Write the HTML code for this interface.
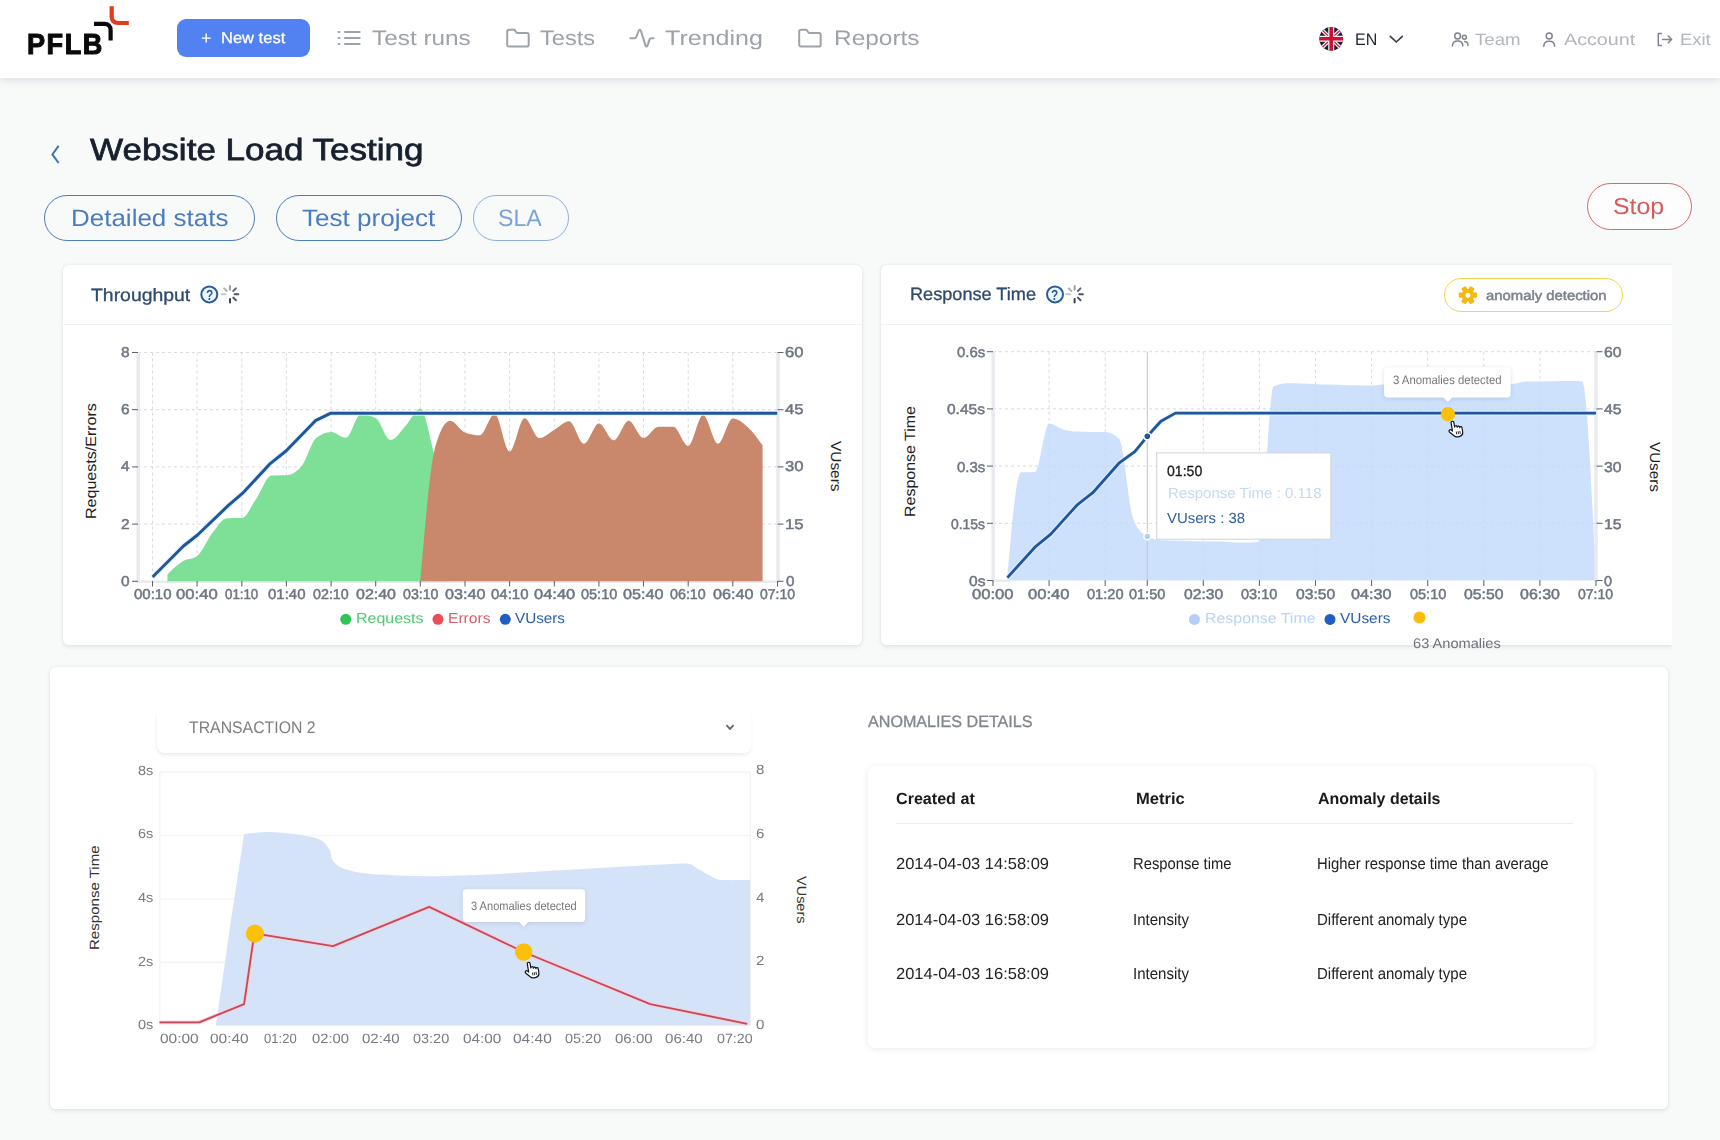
<!DOCTYPE html>
<html lang="en">
<head>
<meta charset="utf-8">
<title>Website Load Testing</title>
<style>
html,body{margin:0;padding:0}
body{width:1720px;height:1140px;position:relative;overflow:hidden;background:#f8f9f9;font-family:"Liberation Sans",sans-serif}
.abs{position:absolute}
.t{text-rendering:geometricPrecision;position:absolute;white-space:nowrap;line-height:1;transform-origin:0 0;display:block}
svg{position:absolute;left:0;top:0;overflow:visible}
#header{left:0;top:0;width:1720px;height:77.6px;background:#fff;box-shadow:0 2px 8px rgba(60,60,100,.14)}
.card{background:#fff;border-radius:6px;box-shadow:0 1.5px 4px rgba(40,50,80,.10),0 0 3px rgba(40,50,80,.05)}
.pill{border:1.5px solid #4a7cc0;border-radius:24px;box-sizing:border-box}
.hsep{height:1px;background:#eff1f3}

</style>
</head>
<body>
<div id="header" class="abs"></div>
<div class="abs" id="newtest" style="left:176.75px;top:18.75px;width:133.25px;height:38.25px;border-radius:9px;background:#5282f2"></div>
<div class="abs pill" style="left:44.3px;top:194.6px;width:210.4px;height:46.4px"></div>
<div class="abs pill" style="left:275.9px;top:194.6px;width:185.9px;height:46.4px"></div>
<div class="abs pill" style="left:473.1px;top:194.6px;width:96.1px;height:46.4px;border-color:#8db0de"></div>
<div class="abs pill" style="left:1587px;top:182.7px;width:104.5px;height:47.1px;border-color:#d4686a;background:#fdfdfd"></div>

<div class="abs card" id="card1" style="left:62.5px;top:265px;width:799px;height:380px"></div>
<div class="abs hsep" style="left:62.5px;top:323.5px;width:799px"></div>
<div class="abs card" id="card2" style="left:881px;top:265.1px;width:791px;height:380.2px;border-radius:6px 0 0 6px;clip-path:inset(-10px 0 -10px -10px)"></div>
<div class="abs hsep" style="left:881px;top:323.5px;width:791px"></div>
<div class="abs pill" style="left:1444.1px;top:278.1px;width:179.2px;height:33.5px;border-color:#f3d450;border-width:1.9px"></div>

<div class="abs card" id="card3" style="left:49.5px;top:667.4px;width:1618px;height:441.6px"></div>
<div class="abs" id="dropdown" style="left:157.3px;top:707.9px;width:593.3px;height:45px;border-radius:7px;background:#fff;box-shadow:0 3px 4px -1px rgba(40,50,70,.08),-1px 1px 2px rgba(40,50,70,.03)"></div>
<div class="abs card" id="tablecard" style="left:867.6px;top:765.9px;width:726px;height:282.2px;border-radius:7px;box-shadow:0 1px 6px rgba(40,50,70,.10)"></div>
<div class="abs hsep" style="left:895.5px;top:823px;width:677.5px;background:#ededed"></div>

<svg id="gfx" width="1720" height="1140" viewBox="0 0 1720 1140">
<defs><filter id="sh" x="-20%" y="-40%" width="140%" height="190%"><feDropShadow dx="0" dy="1" stdDeviation="2.2" flood-color="#3c4a64" flood-opacity=".18"/></filter></defs>
<g id="icons">
<path d="M94,23.8H104.5C108.2,23.8 110.6,26.2 110.6,30V40.6" fill="none" stroke="#0a0a0a" stroke-width="4.2"/>
<path d="M111.7,6.2V16.5C111.7,20.5 114,23 118,23H128.8" fill="none" stroke="#e03c1f" stroke-width="4.2"/>
<g stroke="#9ea3a9" stroke-width="2.1" fill="none" stroke-linecap="round">
<path d="M338.6,32H339.4M345,32H359.6"/>
<path d="M338.6,38H339.4M345,38H359.6"/>
<path d="M338.6,44H339.4M345,44H359.6"/>
</g>
<path transform="translate(506.3,28.8)" d="M0.9,2.7C0.9,1.7 1.7,0.9 2.7,0.9H8L10.6,4.2H20.6C21.6,4.2 22.4,5 22.4,6V16C22.4,17 21.6,17.8 20.6,17.8H2.7C1.7,17.8 0.9,17 0.9,16Z" fill="none" stroke="#9ea3a9" stroke-width="2" stroke-linejoin="round"/>
<path transform="translate(798.3,28.8)" d="M0.9,2.7C0.9,1.7 1.7,0.9 2.7,0.9H8L10.6,4.2H20.6C21.6,4.2 22.4,5 22.4,6V16C22.4,17 21.6,17.8 20.6,17.8H2.7C1.7,17.8 0.9,17 0.9,16Z" fill="none" stroke="#9ea3a9" stroke-width="2" stroke-linejoin="round"/>
<path d="M630.3,38.3H634.6C635.6,38.3 636,37.8 636.4,36.8L638.6,31C639.2,29.4 640.4,29.4 641,31L645.4,45.4C645.9,47 647,47 647.6,45.4L649.4,39.9C649.8,38.8 650.3,38.3 651.3,38.3H653.6" fill="none" stroke="#9ea3a9" stroke-width="2" stroke-linejoin="round" stroke-linecap="round"/>
<g><clipPath id="fc"><circle cx="1331.2" cy="38.8" r="11.9"/></clipPath><g clip-path="url(#fc)"><rect x="1319" y="26" width="25" height="26" fill="#1d1f38"/><path d="M1319,27L1343.4,50.6M1343.4,27L1319,50.6" stroke="#f3f3f6" stroke-width="3.6"/><path d="M1319,27L1343.4,50.6M1343.4,27L1319,50.6" stroke="#c8102e" stroke-width="1.2"/><path d="M1331.2,26V52M1318,38.8H1345" stroke="#f3f3f6" stroke-width="6"/><path d="M1331.2,26V52M1318,38.8H1345" stroke="#cc1230" stroke-width="3.6"/></g></g>
<path d="M1390.3,36.4L1396.3,42L1402.3,36.4" fill="none" stroke="#3a3f4a" stroke-width="1.7" stroke-linecap="round" stroke-linejoin="round"/>
<g fill="none" stroke="#7f848e" stroke-width="1.5" stroke-linecap="round"><circle cx="1457.6" cy="36" r="2.9"/><path d="M1452.4,46C1452.4,42.6 1454.6,41 1457.6,41C1460.6,41 1462.8,42.6 1462.8,46"/><circle cx="1464.4" cy="37.2" r="2"/><path d="M1464.6,41.6C1466.6,41.6 1468,43 1468,45.6"/></g>
<g fill="none" stroke="#7f848e" stroke-width="1.5" stroke-linecap="round"><circle cx="1549.2" cy="36" r="3"/><path d="M1543.8,46.2C1543.8,42.4 1546,41.2 1549.2,41.2C1552.4,41.2 1554.6,42.4 1554.6,46.2"/></g>
<g fill="none" stroke="#7f848e" stroke-width="1.5" stroke-linecap="round" stroke-linejoin="round"><path d="M1661.4,33.4H1658.3V45.4H1661.4"/><path d="M1662.6,39.4H1671.4M1668.2,36L1671.6,39.4L1668.2,42.8"/></g>
<path d="M58.6,145.8L52.4,154.4L58.6,163" fill="none" stroke="#3f73b8" stroke-width="2"/>
<circle cx="209.3" cy="294.4" r="8" fill="#ebf6ff" stroke="#2c5c96" stroke-width="2"/>
<circle cx="1055" cy="294.4" r="8" fill="#ebf6ff" stroke="#2c5c96" stroke-width="2"/>
<g stroke-linecap="round" stroke-width="2" fill="none" stroke="#3b3f55"><path d="M230,289.7L230,286" stroke-opacity="0.5"/><path d="M233.3,291L235.9,288.4" stroke-opacity="0.8"/><path d="M234.6,294.3L238.3,294.3" stroke-opacity="0.9"/><path d="M233.3,297.6L235.9,300.2" stroke-opacity="0.9"/><path d="M230,298.9L230,302.6" stroke-opacity="1.0"/><path d="M226.7,297.6L224.1,300.2" stroke-opacity="0.04"/><path d="M225.4,294.3L221.7,294.3" stroke-opacity="0.3"/><path d="M226.7,291L224.1,288.4" stroke-opacity="0.42"/></g>
<g stroke-linecap="round" stroke-width="2" fill="none" stroke="#3b3f55"><path d="M1074.6,289.7L1074.6,286" stroke-opacity="0.5"/><path d="M1077.9,291L1080.5,288.4" stroke-opacity="0.8"/><path d="M1079.2,294.3L1082.9,294.3" stroke-opacity="0.9"/><path d="M1077.9,297.6L1080.5,300.2" stroke-opacity="0.9"/><path d="M1074.6,298.9L1074.6,302.6" stroke-opacity="1.0"/><path d="M1071.3,297.6L1068.7,300.2" stroke-opacity="0.04"/><path d="M1070,294.3L1066.3,294.3" stroke-opacity="0.3"/><path d="M1071.3,291L1068.7,288.4" stroke-opacity="0.42"/></g>
<g fill="#f4b90f"><circle cx="1467.9" cy="295.2" r="6.2"/><rect x="1465.3" y="286" width="5.2" height="4.4" rx="1.2" transform="rotate(30 1467.9 295.2)"/><rect x="1465.3" y="286" width="5.2" height="4.4" rx="1.2" transform="rotate(90 1467.9 295.2)"/><rect x="1465.3" y="286" width="5.2" height="4.4" rx="1.2" transform="rotate(150 1467.9 295.2)"/><rect x="1465.3" y="286" width="5.2" height="4.4" rx="1.2" transform="rotate(210 1467.9 295.2)"/><rect x="1465.3" y="286" width="5.2" height="4.4" rx="1.2" transform="rotate(270 1467.9 295.2)"/><rect x="1465.3" y="286" width="5.2" height="4.4" rx="1.2" transform="rotate(330 1467.9 295.2)"/></g><circle cx="1467.9" cy="295.2" r="2.5" fill="#fff"/>
</g>
<g id="chart1">
<g fill="none" stroke="#d9dadd" stroke-width="1" stroke-dasharray="3 3">
<path d="M152.5,352.5V581.3"/>
<path d="M197.1,352.5V581.3"/>
<path d="M241.8,352.5V581.3"/>
<path d="M286.4,352.5V581.3"/>
<path d="M331.1,352.5V581.3"/>
<path d="M375.7,352.5V581.3"/>
<path d="M420.3,352.5V581.3"/>
<path d="M465,352.5V581.3"/>
<path d="M509.6,352.5V581.3"/>
<path d="M554.3,352.5V581.3"/>
<path d="M598.9,352.5V581.3"/>
<path d="M643.5,352.5V581.3"/>
<path d="M688.2,352.5V581.3"/>
<path d="M732.8,352.5V581.3"/>
<path d="M777.5,352.5V581.3"/>
<path d="M138,352.5H777"/>
<path d="M138,409.7H777"/>
<path d="M138,466.9H777"/>
<path d="M138,524.1H777"/>
</g>
<g fill="none" stroke="#e9eaee" stroke-width="3.5"><path d="M138.2,352V582.8"/><path d="M778,352V582.8"/></g>
<path d="M138,581.8H779" stroke="#e9eaee" stroke-width="2.6" fill="none"/>
<path d="M167.4,581.3L167.4,574.5C172.3,569.5 177.3,564.6 182.3,561.5C187.2,558.4 192.2,559.7 197.1,556C202.1,552.3 207.1,539.8 212,533.5C217,527.2 221.9,518.3 226.9,518.2C231.9,518.1 236.8,518.1 241.8,518C246.7,517.9 251.7,505.1 256.7,498C261.6,490.9 266.6,475.5 271.5,475.4C276.5,475.3 281.5,475.3 286.4,475.2C291.4,475.1 296.3,472.3 301.3,466.5C306.3,460.7 311.2,442 316.2,438C321.1,434 326.1,432 331.1,432C336,432 341,437.8 345.9,437.8C350.9,437.8 355.9,414.2 360.8,414.2C365.8,414.2 370.7,415.5 375.7,418C380.7,420.5 385.6,440 390.6,440C395.5,440 400.5,431.2 405.5,426C410.4,420.8 415.4,408.8 420.3,408.8C425.3,408.8 430.3,441.8 435.2,457C440.2,472.2 445.1,486.1 450.1,500 L450.1,581.3Z" fill="#74de8e" fill-opacity=".93"/>
<path d="M420.3,581.3C425.3,522.9 430.3,464.5 435.2,447C440.2,429.5 445.1,420.7 450.1,420.7C455.1,420.7 460,430.5 465,432.4C469.9,434.3 474.9,435.2 479.9,435.2C484.8,435.2 489.8,414 494.7,414C499.7,414 504.7,451.5 509.6,451.5C514.6,451.5 519.5,418.2 524.5,418.2C529.5,418.2 534.4,438.1 539.4,438.1C544.3,438.1 549.3,432.5 554.3,429.7C559.2,426.9 564.2,421.2 569.1,421.2C574.1,421.2 579.1,443.7 584,443.7C589,443.7 593.9,423.5 598.9,423.5C603.9,423.5 608.8,440.3 613.8,440.3C618.7,440.3 623.7,420.7 628.7,420.7C633.6,420.7 638.6,438 643.5,438C648.5,438 653.5,426.8 658.4,426.8C663.4,426.8 668.3,426.8 673.3,426.8C678.3,426.8 683.2,445.9 688.2,445.9C693.1,445.9 698.1,415 703.1,415C708,415 713,443.7 717.9,443.7C722.9,443.7 727.9,418.4 732.8,418.4C737.8,418.4 742.7,422.5 747.7,427C752.7,431.5 757.6,438.6 762.6,445.6 L762.6,581.3Z" fill="#c9876b"/>
<g fill="none" stroke="#5f636b" stroke-width="1.05">
<path d="M132,352.5H138"/><path d="M777.5,352.5H783.5"/>
<path d="M132,409.7H138"/><path d="M777.5,409.7H783.5"/>
<path d="M132,466.9H138"/><path d="M777.5,466.9H783.5"/>
<path d="M132,524.1H138"/><path d="M777.5,524.1H783.5"/>
<path d="M132,581.3H138"/><path d="M777.5,581.3H783.5"/>
<path d="M152.5,581V586.6"/>
<path d="M197.1,581V586.6"/>
<path d="M241.8,581V586.6"/>
<path d="M286.4,581V586.6"/>
<path d="M331.1,581V586.6"/>
<path d="M375.7,581V586.6"/>
<path d="M420.3,581V586.6"/>
<path d="M465,581V586.6"/>
<path d="M509.6,581V586.6"/>
<path d="M554.3,581V586.6"/>
<path d="M598.9,581V586.6"/>
<path d="M643.5,581V586.6"/>
<path d="M688.2,581V586.6"/>
<path d="M732.8,581V586.6"/>
<path d="M777.5,581V586.6"/>
</g>
<path d="M152.6,577L183.5,546L197.5,535L228.4,505.4L242.4,493.4L270.5,463.3L286,451L315.4,420.7L330.9,413.2L777.2,413.2" fill="none" stroke="#e2f3fe" stroke-opacity=".9" stroke-width="5" stroke-linejoin="round"/>
<path d="M152.6,577L183.5,546L197.5,535L228.4,505.4L242.4,493.4L270.5,463.3L286,451L315.4,420.7L330.9,413.2L777.2,413.2" fill="none" stroke="#1f569c" stroke-width="3" stroke-linejoin="round"/>
<circle cx="345.75" cy="619.3" r="5.5" fill="#2fc45a"/><circle cx="438" cy="619.3" r="5.5" fill="#ee4b55"/><circle cx="505.3" cy="619.3" r="5.5" fill="#1f5fc4"/>
</g>
<g id="chart2">
<g fill="none" stroke="#d9dadd" stroke-width="1" stroke-dasharray="3 3">
<path d="M993,351.7V580.5"/>
<path d="M1049.1,351.7V580.5"/>
<path d="M1105.2,351.7V580.5"/>
<path d="M1203.3,351.7V580.5"/>
<path d="M1259.4,351.7V580.5"/>
<path d="M1315.5,351.7V580.5"/>
<path d="M1371.6,351.7V580.5"/>
<path d="M1427.7,351.7V580.5"/>
<path d="M1483.8,351.7V580.5"/>
<path d="M1539.9,351.7V580.5"/>
<path d="M1596,351.7V580.5"/>
<path d="M993,351.7H1596"/>
<path d="M993,408.9H1596"/>
<path d="M993,466.1H1596"/>
<path d="M993,523.3H1596"/>
</g>
<path d="M1007,580.5C1011.7,526.5 1016.4,472.4 1021,472.2C1025.7,472 1030.4,472.1 1035.1,471.9C1039.7,471.7 1044.4,423.5 1049.1,423.5C1053.8,423.5 1058.4,428.1 1063.1,429.5C1067.8,430.9 1072.5,431.4 1077.1,431.6C1081.8,431.8 1086.5,431.9 1091.2,431.9C1095.8,431.9 1100.5,431.9 1105.2,431.9C1109.9,431.9 1114.5,434.3 1119.2,439C1123.9,443.7 1128.6,507.3 1133.2,519C1137.9,530.7 1142.6,534 1147.3,536.5C1151.9,539 1156.6,540.1 1161.3,540.3C1166,540.5 1170.6,540.5 1175.3,540.6C1180,540.7 1184.6,540.8 1189.3,540.9C1194,541 1198.7,541.1 1203.3,541.2C1208,541.3 1212.7,541.4 1217.4,541.6C1222,541.8 1226.7,542.1 1231.4,542.3C1236.1,542.5 1240.7,542.8 1245.4,542.8C1250.1,542.8 1254.8,542.3 1259.4,541.4C1264.1,540.5 1268.8,388.7 1273.5,386.5C1278.1,384.3 1282.8,383.2 1287.5,383.2C1292.2,383.2 1296.8,383.4 1301.5,383.6C1306.2,383.8 1310.9,384 1315.5,384.2C1320.2,384.4 1324.9,384.5 1329.6,384.6C1334.2,384.7 1338.9,384.8 1343.6,384.9C1348.2,385 1352.9,385.1 1357.6,385.2C1362.3,385.3 1366.9,385.4 1371.6,385.4C1376.3,385.4 1381,384.3 1385.6,384.2C1390.3,384.1 1395,384 1399.7,384C1404.3,384 1409,384.2 1413.7,384.3C1418.4,384.4 1423,384.4 1427.7,384.5C1432.4,384.6 1437.1,384.6 1441.7,384.6C1446.4,384.6 1451.1,384.6 1455.8,384.6C1460.4,384.6 1465.1,384.5 1469.8,384.5C1474.5,384.5 1479.1,384.4 1483.8,384.4C1488.5,384.4 1493.2,384.4 1497.8,384.3C1502.5,384.2 1507.2,384.2 1511.9,384C1516.5,383.8 1521.2,381.7 1525.9,381.6C1530.5,381.5 1535.2,381.5 1539.9,381.4C1544.6,381.3 1549.2,381.2 1553.9,381.2C1558.6,381.1 1563.3,381.1 1567.9,381.1C1572.6,381.1 1577.3,381.2 1582,381.3C1586.6,381.4 1591.3,481 1596,580.5Z" fill="#c0d9fb" fill-opacity=".8"/>
<path d="M1147.3,351.7V580.5" stroke="#c2c5ca" stroke-width="1" fill="none"/>
<g fill="none" stroke="#e9eaee" stroke-width="3.5"><path d="M993.2,351V582"/><path d="M1596,351V582"/></g>
<path d="M993,580.8H1010" stroke="#e9eaee" stroke-width="2.4" fill="none"/>
<g fill="none" stroke="#5f636b" stroke-width="1.05">
<path d="M987,351.7H993"/><path d="M1596.5,351.7H1602.5"/>
<path d="M987,408.9H993"/><path d="M1596.5,408.9H1602.5"/>
<path d="M987,466.1H993"/><path d="M1596.5,466.1H1602.5"/>
<path d="M987,523.3H993"/><path d="M1596.5,523.3H1602.5"/>
<path d="M987,580.5H993"/><path d="M1596.5,580.5H1602.5"/>
<path d="M993,580.3V586"/>
<path d="M1049.1,580.3V586"/>
<path d="M1105.2,580.3V586"/>
<path d="M1147.3,580.3V586"/>
<path d="M1203.3,580.3V586"/>
<path d="M1259.4,580.3V586"/>
<path d="M1315.5,580.3V586"/>
<path d="M1371.6,580.3V586"/>
<path d="M1427.7,580.3V586"/>
<path d="M1483.8,580.3V586"/>
<path d="M1539.9,580.3V586"/>
<path d="M1596,580.3V586"/>
</g>
<path d="M1007.4,577.6L1034.9,547.2L1050.8,534.1L1076.9,505.2L1092.8,492.7L1118.9,463.2L1134.8,451.6L1147.3,436.3L1160.9,421.2L1175.4,413.1L1596,413.1" fill="none" stroke="#e2f3fe" stroke-opacity=".8" stroke-width="4.6" stroke-linejoin="round"/>
<path d="M1007.4,577.6L1034.9,547.2L1050.8,534.1L1076.9,505.2L1092.8,492.7L1118.9,463.2L1134.8,451.6L1147.3,436.3L1160.9,421.2L1175.4,413.1L1596,413.1" fill="none" stroke="#1f569c" stroke-width="2.8" stroke-linejoin="round"/>
<circle cx="1147.3" cy="436.3" r="3.6" fill="#1f569c" stroke="#fff" stroke-width="1.6"/>
<circle cx="1147.3" cy="536.4" r="3.4" fill="#b4cdf2" stroke="#fff" stroke-width="1.6"/>
<rect x="1156.7" y="452.9" width="174.2" height="86.3" fill="#fff" stroke="#cfd2d6" stroke-width="1"/>
<g filter="url(#sh)"><rect x="1384.1" y="367.6" width="126.5" height="29.8" rx="4" fill="#fff"/><path d="M1442.8,397L1447.8,402L1452.8,397Z" fill="#fff"/></g>
<circle cx="1447.9" cy="414.2" r="7.2" fill="#fcc009"/>
<g transform="translate(1452.2,421.3) rotate(-10) scale(1.0) translate(-5.3,-0.6)"><path d="M5.3,0.6C6.1,0.6 6.7,1.2 6.7,2V6.6C6.8,6 7.3,5.6 8,5.6C8.7,5.6 9.2,6.1 9.2,6.8V7.3C9.3,6.8 9.8,6.4 10.4,6.4C11.1,6.4 11.6,6.9 11.6,7.6V8.1C11.7,7.6 12.1,7.3 12.7,7.3C13.3,7.3 13.8,7.8 13.8,8.4V12.2C13.8,15 12,16.8 9.4,16.8H8C6.5,16.8 5.5,16.3 4.6,15.2L0.9,10.9C0.3,10.2 0.4,9.3 1,8.8C1.6,8.4 2.4,8.5 2.9,9.1L3.9,10.3V2C3.9,1.2 4.5,0.6 5.3,0.6Z" fill="#fff" stroke="#10141c" stroke-width="1.2" stroke-linejoin="round"/><path d="M7.5,11.4V14.3M9.3,11.4V14.3M11.1,11.4V14.3" stroke="#10141c" stroke-width=".85" fill="none"/></g>
<circle cx="1194.5" cy="619.4" r="5.5" fill="#b4cff6"/><circle cx="1330" cy="619.4" r="5.5" fill="#1f5fc4"/><circle cx="1419.5" cy="617.6" r="6" fill="#fbbc0c"/>
</g>
<g id="chart3">
<g fill="none" stroke="#f2f3f4" stroke-width="1.2">
<path d="M159.5,772.1H750.2"/>
<path d="M159.5,835.5H750.2"/>
<path d="M159.5,898.9H750.2"/>
<path d="M159.5,962.3H750.2"/>
<path d="M159.8,772V1026"/><path d="M750.2,772V1026"/>
</g>
<path d="M215.8,1025.6L219.5,1000.6L231.1,919.5L244.1,834.1C246,833.9 254.3,832.9 258,832.6C261.7,832.3 265.9,831.8 271.6,832.1C277.3,832.4 294,834 300.6,835C307.2,836 317,837.9 320.9,839.9C324.8,841.9 328.1,847.3 329.6,850C331.1,852.7 331,857.9 332.5,860.2C334,862.5 336.9,865.7 341.1,867.4C345.3,869.1 354.3,872 364.3,873.2C374.3,874.4 402.3,875.8 416.4,876.1C430.5,876.4 454.1,875.8 470,875.2C485.9,874.6 511.6,873 535.8,871.7C560,870.4 631.5,866.2 651.6,865.1C671.7,864 680.2,863.1 686.4,863.6C692.6,864.1 694.1,866.9 698,868.9C701.9,870.9 711.9,876.9 715.4,878.4C718.9,879.9 719.4,879.9 724,880.1C728.6,880.3 746.7,880.1 750.2,880.1L750.2,1025.6Z" fill="#d5e3f8"/>
<path d="M159.5,1022.3L199.3,1022.3L244.1,1004.1L254.3,933.4L333,946.2L429.2,906.8L523.7,952L650.2,1004.1L747.2,1023.8" fill="none" stroke="#f9ced6" stroke-width="3.8" stroke-linejoin="round"/>
<path d="M159.5,1022.3L199.3,1022.3L244.1,1004.1L254.3,933.4L333,946.2L429.2,906.8L523.7,952L650.2,1004.1L747.2,1023.8" fill="none" stroke="#c5495c" stroke-width="1.85" stroke-linejoin="round"/>
<circle cx="254.9" cy="933.6" r="9.1" fill="#fcc009"/><circle cx="523.7" cy="952" r="8.7" fill="#fcc009"/>
<g filter="url(#sh)"><rect x="462.9" y="889.3" width="122.2" height="32.6" rx="4" fill="#fff"/><path d="M518.7,921.5L523.7,926.8L528.7,921.5Z" fill="#fff"/></g>
<g transform="translate(528.4,962.3) rotate(-10) scale(1.0) translate(-5.3,-0.6)"><path d="M5.3,0.6C6.1,0.6 6.7,1.2 6.7,2V6.6C6.8,6 7.3,5.6 8,5.6C8.7,5.6 9.2,6.1 9.2,6.8V7.3C9.3,6.8 9.8,6.4 10.4,6.4C11.1,6.4 11.6,6.9 11.6,7.6V8.1C11.7,7.6 12.1,7.3 12.7,7.3C13.3,7.3 13.8,7.8 13.8,8.4V12.2C13.8,15 12,16.8 9.4,16.8H8C6.5,16.8 5.5,16.3 4.6,15.2L0.9,10.9C0.3,10.2 0.4,9.3 1,8.8C1.6,8.4 2.4,8.5 2.9,9.1L3.9,10.3V2C3.9,1.2 4.5,0.6 5.3,0.6Z" fill="#fff" stroke="#10141c" stroke-width="1.2" stroke-linejoin="round"/><path d="M7.5,11.4V14.3M9.3,11.4V14.3M11.1,11.4V14.3" stroke="#10141c" stroke-width=".85" fill="none"/></g>
<path d="M726.4,725.2L730,728.8L733.6,725.2" fill="none" stroke="#666" stroke-width="1.9"/>
</g>
</svg>
<div id="labels">
<span class="t" id="t0" style="left:26.60px;top:29.00px;font-size:29px;line-height:32px;color:#0a0a0a;font-weight:700;-webkit-text-stroke:1px #0a0a0a;letter-spacing:1.6px;transform:scaleX(0.9352)">PFLB</span>
<span class="t" id="t1" style="left:200.50px;top:28.00px;font-size:18px;line-height:20px;color:#ffffff;font-weight:400;transform:scaleX(0.9985)">+</span>
<span class="t" id="t2" style="left:220.75px;top:30.00px;font-size:15.5px;line-height:17px;color:#ffffff;font-weight:400;-webkit-text-stroke:.3px;transform:scaleX(1.0653)">New test</span>
<span class="t" id="t3" style="left:372.00px;top:27.00px;font-size:21px;line-height:23px;color:#9ea3a9;font-weight:400;transform:scaleX(1.1590)">Test runs</span>
<span class="t" id="t4" style="left:540.00px;top:27.00px;font-size:21px;line-height:23px;color:#9ea3a9;font-weight:400;transform:scaleX(1.1221)">Tests</span>
<span class="t" id="t5" style="left:664.50px;top:27.00px;font-size:21px;line-height:23px;color:#9ea3a9;font-weight:400;transform:scaleX(1.1935)">Trending</span>
<span class="t" id="t6" style="left:833.75px;top:27.00px;font-size:21px;line-height:23px;color:#9ea3a9;font-weight:400;transform:scaleX(1.1628)">Reports</span>
<span class="t" id="t7" style="left:1354.80px;top:30.00px;font-size:16.6px;line-height:19px;color:#1e2330;font-weight:400;transform:scaleX(0.9626)">EN</span>
<span class="t" id="t8" style="left:1475.00px;top:31.00px;font-size:16.4px;line-height:18px;color:#b3b7bc;font-weight:400;transform:scaleX(1.1348)">Team</span>
<span class="t" id="t9" style="left:1564.25px;top:31.00px;font-size:16.4px;line-height:18px;color:#b3b7bc;font-weight:400;transform:scaleX(1.2028)">Account</span>
<span class="t" id="t10" style="left:1680.00px;top:31.00px;font-size:16.4px;line-height:18px;color:#b3b7bc;font-weight:400;transform:scaleX(1.1252)">Exit</span>
<span class="t" id="t11" style="left:90.30px;top:133.00px;font-size:30.6px;line-height:34px;color:#17202e;font-weight:400;-webkit-text-stroke:.75px;transform:scaleX(1.1445)">Website Load Testing</span>
<span class="t" id="t12" style="left:70.80px;top:205.00px;font-size:23.8px;line-height:27px;color:#4a7cc0;font-weight:400;transform:scaleX(1.0916)">Detailed stats</span>
<span class="t" id="t13" style="left:301.70px;top:205.00px;font-size:23.8px;line-height:27px;color:#4a7cc0;font-weight:400;transform:scaleX(1.0954)">Test project</span>
<span class="t" id="t14" style="left:498.30px;top:205.00px;font-size:23.8px;line-height:27px;color:#7aa3d8;font-weight:400;transform:scaleX(0.9714)">SLA</span>
<span class="t" id="t15" style="left:1613.00px;top:193.00px;font-size:23px;line-height:26px;color:#d65a5a;font-weight:400;transform:scaleX(1.0818)">Stop</span>
<span class="t" id="t16" style="left:90.75px;top:285.00px;font-size:17.8px;line-height:20px;color:#2f4a6b;font-weight:400;-webkit-text-stroke:.3px;transform:scaleX(1.0912)">Throughput</span>
<span class="t" id="t17" style="left:909.50px;top:284.00px;font-size:17.8px;line-height:20px;color:#2f4a6b;font-weight:400;-webkit-text-stroke:.3px;transform:scaleX(1.0199)">Response Time</span>
<span class="t" id="t18" style="left:205.70px;top:288.00px;font-size:14.6px;line-height:16px;color:#2c5c96;font-weight:700;transform:scaleX(0.8070)">?</span>
<span class="t" id="t19" style="left:1051.40px;top:288.00px;font-size:14.6px;line-height:16px;color:#2c5c96;font-weight:700;transform:scaleX(0.8070)">?</span>
<span class="t" id="t20" style="left:1485.60px;top:288.00px;font-size:13.4px;line-height:15px;color:#7c818c;font-weight:400;-webkit-text-stroke:.5px;transform:scaleX(1.1087)">anomaly detection</span>
<span class="t" id="t21" style="left:121.40px;top:345.00px;font-size:14.25px;line-height:16px;color:#6e7582;font-weight:400;-webkit-text-stroke:.5px;transform:scaleX(1.0835)">8</span>
<span class="t" id="t22" style="left:121.40px;top:402.00px;font-size:14.25px;line-height:16px;color:#6e7582;font-weight:400;-webkit-text-stroke:.5px;transform:scaleX(1.0835)">6</span>
<span class="t" id="t23" style="left:121.40px;top:459.00px;font-size:14.25px;line-height:16px;color:#6e7582;font-weight:400;-webkit-text-stroke:.5px;transform:scaleX(1.0835)">4</span>
<span class="t" id="t24" style="left:121.40px;top:517.00px;font-size:14.25px;line-height:16px;color:#6e7582;font-weight:400;-webkit-text-stroke:.5px;transform:scaleX(1.0835)">2</span>
<span class="t" id="t25" style="left:121.40px;top:574.00px;font-size:14.25px;line-height:16px;color:#6e7582;font-weight:400;-webkit-text-stroke:.5px;transform:scaleX(1.0835)">0</span>
<span class="t" id="t26" style="left:785.00px;top:345.00px;font-size:14.25px;line-height:16px;color:#6e7582;font-weight:400;-webkit-text-stroke:.5px;transform:scaleX(1.1665)">60</span>
<span class="t" id="t27" style="left:785.00px;top:402.00px;font-size:14.25px;line-height:16px;color:#6e7582;font-weight:400;-webkit-text-stroke:.5px;transform:scaleX(1.1665)">45</span>
<span class="t" id="t28" style="left:785.00px;top:459.00px;font-size:14.25px;line-height:16px;color:#6e7582;font-weight:400;-webkit-text-stroke:.5px;transform:scaleX(1.1665)">30</span>
<span class="t" id="t29" style="left:785.00px;top:517.00px;font-size:14.25px;line-height:16px;color:#6e7582;font-weight:400;-webkit-text-stroke:.5px;transform:scaleX(1.1665)">15</span>
<span class="t" id="t30" style="left:785.50px;top:574.00px;font-size:14.25px;line-height:16px;color:#6e7582;font-weight:400;-webkit-text-stroke:.5px;transform:scaleX(1.0709)">0</span>
<span class="t" id="t31" style="left:133.75px;top:587.00px;font-size:14.25px;line-height:16px;color:#6e7582;font-weight:400;-webkit-text-stroke:.5px;transform:scaleX(1.0512)">00:10</span>
<span class="t" id="t32" style="left:176.26px;top:587.00px;font-size:14.25px;line-height:16px;color:#6e7582;font-weight:400;-webkit-text-stroke:.5px;transform:scaleX(1.1704)">00:40</span>
<span class="t" id="t33" style="left:225.16px;top:587.00px;font-size:14.25px;line-height:16px;color:#6e7582;font-weight:400;-webkit-text-stroke:.5px;transform:scaleX(0.9321)">01:10</span>
<span class="t" id="t34" style="left:267.67px;top:587.00px;font-size:14.25px;line-height:16px;color:#6e7582;font-weight:400;-webkit-text-stroke:.5px;transform:scaleX(1.0512)">01:40</span>
<span class="t" id="t35" style="left:313.19px;top:587.00px;font-size:14.25px;line-height:16px;color:#6e7582;font-weight:400;-webkit-text-stroke:.5px;transform:scaleX(1.0022)">02:10</span>
<span class="t" id="t36" style="left:355.70px;top:587.00px;font-size:14.25px;line-height:16px;color:#6e7582;font-weight:400;-webkit-text-stroke:.5px;transform:scaleX(1.1213)">02:40</span>
<span class="t" id="t37" style="left:402.59px;top:587.00px;font-size:14.25px;line-height:16px;color:#6e7582;font-weight:400;-webkit-text-stroke:.5px;transform:scaleX(0.9952)">03:10</span>
<span class="t" id="t38" style="left:444.73px;top:587.00px;font-size:14.25px;line-height:16px;color:#6e7582;font-weight:400;-webkit-text-stroke:.5px;transform:scaleX(1.1353)">03:40</span>
<span class="t" id="t39" style="left:490.87px;top:587.00px;font-size:14.25px;line-height:16px;color:#6e7582;font-weight:400;-webkit-text-stroke:.5px;transform:scaleX(1.0512)">04:10</span>
<span class="t" id="t40" style="left:533.63px;top:587.00px;font-size:14.25px;line-height:16px;color:#6e7582;font-weight:400;-webkit-text-stroke:.5px;transform:scaleX(1.1564)">04:40</span>
<span class="t" id="t41" style="left:580.77px;top:587.00px;font-size:14.25px;line-height:16px;color:#6e7582;font-weight:400;-webkit-text-stroke:.5px;transform:scaleX(1.0162)">05:10</span>
<span class="t" id="t42" style="left:623.29px;top:587.00px;font-size:14.25px;line-height:16px;color:#6e7582;font-weight:400;-webkit-text-stroke:.5px;transform:scaleX(1.1353)">05:40</span>
<span class="t" id="t43" style="left:670.31px;top:587.00px;font-size:14.25px;line-height:16px;color:#6e7582;font-weight:400;-webkit-text-stroke:.5px;transform:scaleX(1.0022)">06:10</span>
<span class="t" id="t44" style="left:712.57px;top:587.00px;font-size:14.25px;line-height:16px;color:#6e7582;font-weight:400;-webkit-text-stroke:.5px;transform:scaleX(1.1353)">06:40</span>
<span class="t" id="t45" style="left:759.96px;top:587.00px;font-size:14.25px;line-height:16px;color:#6e7582;font-weight:400;-webkit-text-stroke:.5px;transform:scaleX(0.9812)">07:10</span>
<span class="t" id="t46" style="left:84.00px;top:519.20px;font-size:14.8px;line-height:16px;color:#222222;font-weight:400;transform:rotate(-90deg) scaleX(1.0841)">Requests/Errors</span>
<span class="t" id="t47" style="left:843.00px;top:440.90px;font-size:14.5px;line-height:16px;color:#222222;font-weight:400;transform:rotate(90deg) scaleX(1.0621)">VUsers</span>
<span class="t" id="t48" style="left:355.75px;top:611.00px;font-size:14.5px;line-height:16px;color:#52c873;font-weight:400;transform:scaleX(1.1018)">Requests</span>
<span class="t" id="t49" style="left:448.00px;top:611.00px;font-size:14.5px;line-height:16px;color:#d9606a;font-weight:400;transform:scaleX(1.0764)">Errors</span>
<span class="t" id="t50" style="left:515.00px;top:611.00px;font-size:14.5px;line-height:16px;color:#2a5fa8;font-weight:400;transform:scaleX(1.0516)">VUsers</span>
<span class="t" id="t51" style="left:957.10px;top:345.00px;font-size:14.25px;line-height:16px;color:#6e7582;font-weight:400;-webkit-text-stroke:.5px;transform:scaleX(1.0469)">0.6s</span>
<span class="t" id="t52" style="left:947.40px;top:402.00px;font-size:14.25px;line-height:16px;color:#6e7582;font-weight:400;-webkit-text-stroke:.5px;transform:scaleX(1.0867)">0.45s</span>
<span class="t" id="t53" style="left:957.10px;top:460.00px;font-size:14.25px;line-height:16px;color:#6e7582;font-weight:400;-webkit-text-stroke:.5px;transform:scaleX(1.0469)">0.3s</span>
<span class="t" id="t54" style="left:951.30px;top:517.00px;font-size:14.25px;line-height:16px;color:#6e7582;font-weight:400;-webkit-text-stroke:.5px;transform:scaleX(0.9749)">0.15s</span>
<span class="t" id="t55" style="left:968.90px;top:574.00px;font-size:14.25px;line-height:16px;color:#6e7582;font-weight:400;-webkit-text-stroke:.5px;transform:scaleX(1.0888)">0s</span>
<span class="t" id="t56" style="left:1604.00px;top:345.00px;font-size:14.25px;line-height:16px;color:#6e7582;font-weight:400;-webkit-text-stroke:.5px;transform:scaleX(1.1034)">60</span>
<span class="t" id="t57" style="left:1604.00px;top:402.00px;font-size:14.25px;line-height:16px;color:#6e7582;font-weight:400;-webkit-text-stroke:.5px;transform:scaleX(1.1034)">45</span>
<span class="t" id="t58" style="left:1604.00px;top:460.00px;font-size:14.25px;line-height:16px;color:#6e7582;font-weight:400;-webkit-text-stroke:.5px;transform:scaleX(1.1034)">30</span>
<span class="t" id="t59" style="left:1604.00px;top:517.00px;font-size:14.25px;line-height:16px;color:#6e7582;font-weight:400;-webkit-text-stroke:.5px;transform:scaleX(1.1034)">15</span>
<span class="t" id="t60" style="left:1604.20px;top:574.00px;font-size:14.25px;line-height:16px;color:#6e7582;font-weight:400;-webkit-text-stroke:.5px;transform:scaleX(1.0079)">0</span>
<span class="t" id="t61" style="left:972.20px;top:587.00px;font-size:14.25px;line-height:16px;color:#6e7582;font-weight:400;-webkit-text-stroke:.5px;transform:scaleX(1.1662)">00:00</span>
<span class="t" id="t62" style="left:1028.29px;top:587.00px;font-size:14.25px;line-height:16px;color:#6e7582;font-weight:400;-webkit-text-stroke:.5px;transform:scaleX(1.1662)">00:40</span>
<span class="t" id="t63" style="left:1086.93px;top:587.00px;font-size:14.25px;line-height:16px;color:#6e7582;font-weight:400;-webkit-text-stroke:.5px;transform:scaleX(1.0232)">01:20</span>
<span class="t" id="t64" style="left:1129.13px;top:587.00px;font-size:14.25px;line-height:16px;color:#6e7582;font-weight:400;-webkit-text-stroke:.5px;transform:scaleX(1.0162)">01:50</span>
<span class="t" id="t65" style="left:1183.72px;top:587.00px;font-size:14.25px;line-height:16px;color:#6e7582;font-weight:400;-webkit-text-stroke:.5px;transform:scaleX(1.1003)">02:30</span>
<span class="t" id="t66" style="left:1241.31px;top:587.00px;font-size:14.25px;line-height:16px;color:#6e7582;font-weight:400;-webkit-text-stroke:.5px;transform:scaleX(1.0162)">03:10</span>
<span class="t" id="t67" style="left:1295.90px;top:587.00px;font-size:14.25px;line-height:16px;color:#6e7582;font-weight:400;-webkit-text-stroke:.5px;transform:scaleX(1.1003)">03:50</span>
<span class="t" id="t68" style="left:1351.37px;top:587.00px;font-size:14.25px;line-height:16px;color:#6e7582;font-weight:400;-webkit-text-stroke:.5px;transform:scaleX(1.1353)">04:30</span>
<span class="t" id="t69" style="left:1409.59px;top:587.00px;font-size:14.25px;line-height:16px;color:#6e7582;font-weight:400;-webkit-text-stroke:.5px;transform:scaleX(1.0162)">05:10</span>
<span class="t" id="t70" style="left:1464.06px;top:587.00px;font-size:14.25px;line-height:16px;color:#6e7582;font-weight:400;-webkit-text-stroke:.5px;transform:scaleX(1.1073)">05:50</span>
<span class="t" id="t71" style="left:1519.90px;top:587.00px;font-size:14.25px;line-height:16px;color:#6e7582;font-weight:400;-webkit-text-stroke:.5px;transform:scaleX(1.1213)">06:30</span>
<span class="t" id="t72" style="left:1578.49px;top:587.00px;font-size:14.25px;line-height:16px;color:#6e7582;font-weight:400;-webkit-text-stroke:.5px;transform:scaleX(0.9812)">07:10</span>
<span class="t" id="t73" style="left:903.00px;top:517.20px;font-size:14.8px;line-height:16px;color:#222222;font-weight:400;transform:rotate(-90deg) scaleX(1.0787)">Response Time</span>
<span class="t" id="t74" style="left:1662.00px;top:441.50px;font-size:14.5px;line-height:16px;color:#222222;font-weight:400;transform:rotate(90deg) scaleX(1.0474)">VUsers</span>
<span class="t" id="t75" style="left:1204.50px;top:611.00px;font-size:14.5px;line-height:16px;color:#b9d3f5;font-weight:400;transform:scaleX(1.0968)">Response Time</span>
<span class="t" id="t76" style="left:1340.00px;top:611.00px;font-size:14.5px;line-height:16px;color:#2a5fa8;font-weight:400;transform:scaleX(1.0621)">VUsers</span>
<span class="t" id="t77" style="left:1413.00px;top:636.00px;font-size:13.8px;line-height:15px;color:#6b7280;font-weight:400;transform:scaleX(1.0592)">63 Anomalies</span>
<span class="t" id="t78" style="left:1393.40px;top:373.00px;font-size:12.2px;line-height:14px;color:#777777;font-weight:400;transform:scaleX(0.9318)">3 Anomalies detected</span>
<span class="t" id="t79" style="left:1166.60px;top:464.00px;font-size:14.7px;line-height:16px;color:#1a1a1a;font-weight:400;-webkit-text-stroke:.3px;transform:scaleX(0.9601)">01:50</span>
<span class="t" id="t80" style="left:1167.50px;top:486.00px;font-size:14.7px;line-height:16px;color:#c5d9f3;font-weight:400;transform:scaleX(1.0237)">Response Time : 0.118</span>
<span class="t" id="t81" style="left:1166.90px;top:511.00px;font-size:14.7px;line-height:16px;color:#2f5f9e;font-weight:400;transform:scaleX(1.0178)">VUsers : 38</span>
<span class="t" id="t82" style="left:138.40px;top:763.00px;font-size:13.4px;line-height:15px;color:#787b81;font-weight:400;transform:scaleX(1.0808)">8s</span>
<span class="t" id="t83" style="left:138.40px;top:826.00px;font-size:13.4px;line-height:15px;color:#787b81;font-weight:400;transform:scaleX(1.0808)">6s</span>
<span class="t" id="t84" style="left:138.40px;top:890.00px;font-size:13.4px;line-height:15px;color:#787b81;font-weight:400;transform:scaleX(1.0808)">4s</span>
<span class="t" id="t85" style="left:138.40px;top:954.00px;font-size:13.4px;line-height:15px;color:#787b81;font-weight:400;transform:scaleX(1.0808)">2s</span>
<span class="t" id="t86" style="left:138.40px;top:1017.00px;font-size:13.4px;line-height:15px;color:#787b81;font-weight:400;transform:scaleX(1.0808)">0s</span>
<span class="t" id="t87" style="left:756.00px;top:762.00px;font-size:13.4px;line-height:15px;color:#787b81;font-weight:400;transform:scaleX(1.1270)">8</span>
<span class="t" id="t88" style="left:756.00px;top:826.00px;font-size:13.4px;line-height:15px;color:#787b81;font-weight:400;transform:scaleX(1.1270)">6</span>
<span class="t" id="t89" style="left:756.00px;top:890.00px;font-size:13.4px;line-height:15px;color:#787b81;font-weight:400;transform:scaleX(1.1270)">4</span>
<span class="t" id="t90" style="left:756.00px;top:953.00px;font-size:13.4px;line-height:15px;color:#787b81;font-weight:400;transform:scaleX(1.1270)">2</span>
<span class="t" id="t91" style="left:756.00px;top:1017.00px;font-size:13.4px;line-height:15px;color:#787b81;font-weight:400;transform:scaleX(1.1270)">0</span>
<span class="t" id="t92" style="left:159.55px;top:1031.00px;font-size:13.4px;line-height:15px;color:#787b81;font-weight:400;transform:scaleX(1.1547)">00:00</span>
<span class="t" id="t93" style="left:210.07px;top:1031.00px;font-size:13.4px;line-height:15px;color:#787b81;font-weight:400;transform:scaleX(1.1547)">00:40</span>
<span class="t" id="t94" style="left:263.59px;top:1031.00px;font-size:13.4px;line-height:15px;color:#787b81;font-weight:400;transform:scaleX(0.9757)">01:20</span>
<span class="t" id="t95" style="left:311.96px;top:1031.00px;font-size:13.4px;line-height:15px;color:#787b81;font-weight:400;transform:scaleX(1.1040)">02:00</span>
<span class="t" id="t96" style="left:362.18px;top:1031.00px;font-size:13.4px;line-height:15px;color:#787b81;font-weight:400;transform:scaleX(1.1219)">02:40</span>
<span class="t" id="t97" style="left:413.40px;top:1031.00px;font-size:13.4px;line-height:15px;color:#787b81;font-weight:400;transform:scaleX(1.0801)">03:20</span>
<span class="t" id="t98" style="left:462.87px;top:1031.00px;font-size:13.4px;line-height:15px;color:#787b81;font-weight:400;transform:scaleX(1.1428)">04:00</span>
<span class="t" id="t99" style="left:513.14px;top:1031.00px;font-size:13.4px;line-height:15px;color:#787b81;font-weight:400;transform:scaleX(1.1577)">04:40</span>
<span class="t" id="t100" style="left:564.96px;top:1031.00px;font-size:13.4px;line-height:15px;color:#787b81;font-weight:400;transform:scaleX(1.0801)">05:20</span>
<span class="t" id="t101" style="left:614.78px;top:1031.00px;font-size:13.4px;line-height:15px;color:#787b81;font-weight:400;transform:scaleX(1.1219)">06:00</span>
<span class="t" id="t102" style="left:665.25px;top:1031.00px;font-size:13.4px;line-height:15px;color:#787b81;font-weight:400;transform:scaleX(1.1248)">06:40</span>
<span class="t" id="t103" style="left:716.82px;top:1031.00px;font-size:13.4px;line-height:15px;color:#787b81;font-weight:400;transform:scaleX(1.0622)">07:20</span>
<span class="t" id="t104" style="left:87.00px;top:950.00px;font-size:13.4px;line-height:15px;color:#333333;font-weight:400;transform:rotate(-90deg) scaleX(1.1242)">Response Time</span>
<span class="t" id="t105" style="left:809.00px;top:875.50px;font-size:13.4px;line-height:15px;color:#333333;font-weight:400;transform:rotate(90deg) scaleX(1.0819)">VUsers</span>
<span class="t" id="t106" style="left:470.70px;top:899.00px;font-size:12.2px;line-height:14px;color:#777777;font-weight:400;transform:scaleX(0.9069)">3 Anomalies detected</span>
<span class="t" id="t107" style="left:189.10px;top:718.00px;font-size:16.8px;line-height:19px;color:#7e7e7e;font-weight:400;transform:scaleX(0.9428)">TRANSACTION 2</span>
<span class="t" id="t108" style="left:868.00px;top:713.00px;font-size:16.4px;line-height:18px;color:#80868d;font-weight:400;-webkit-text-stroke:.3px;transform:scaleX(0.9833)">ANOMALIES DETAILS</span>
<span class="t" id="t109" style="left:896.25px;top:790.00px;font-size:16.2px;line-height:18px;color:#1a1a1a;font-weight:700;transform:scaleX(0.9947)">Created at</span>
<span class="t" id="t110" style="left:1135.50px;top:790.00px;font-size:16.2px;line-height:18px;color:#1a1a1a;font-weight:700;transform:scaleX(1.0223)">Metric</span>
<span class="t" id="t111" style="left:1317.50px;top:790.00px;font-size:16.2px;line-height:18px;color:#1a1a1a;font-weight:700;transform:scaleX(0.9867)">Anomaly details</span>
<span class="t" id="t112" style="left:895.75px;top:855.00px;font-size:16.1px;line-height:18px;color:#222222;font-weight:400;transform:scaleX(1.0237)">2014-04-03 14:58:09</span>
<span class="t" id="t113" style="left:1133.25px;top:855.00px;font-size:16.1px;line-height:18px;color:#222222;font-weight:400;transform:scaleX(0.9175)">Response time</span>
<span class="t" id="t114" style="left:1316.75px;top:855.00px;font-size:16.1px;line-height:18px;color:#222222;font-weight:400;transform:scaleX(0.9209)">Higher response time than average</span>
<span class="t" id="t115" style="left:895.75px;top:911.00px;font-size:16.1px;line-height:18px;color:#222222;font-weight:400;transform:scaleX(1.0237)">2014-04-03 16:58:09</span>
<span class="t" id="t116" style="left:1133.30px;top:911.00px;font-size:16.1px;line-height:18px;color:#222222;font-weight:400;transform:scaleX(0.9335)">Intensity</span>
<span class="t" id="t117" style="left:1316.75px;top:911.00px;font-size:16.1px;line-height:18px;color:#222222;font-weight:400;transform:scaleX(0.9332)">Different anomaly type</span>
<span class="t" id="t118" style="left:895.75px;top:965.00px;font-size:16.1px;line-height:18px;color:#222222;font-weight:400;transform:scaleX(1.0237)">2014-04-03 16:58:09</span>
<span class="t" id="t119" style="left:1133.30px;top:965.00px;font-size:16.1px;line-height:18px;color:#222222;font-weight:400;transform:scaleX(0.9335)">Intensity</span>
<span class="t" id="t120" style="left:1316.75px;top:965.00px;font-size:16.1px;line-height:18px;color:#222222;font-weight:400;transform:scaleX(0.9332)">Different anomaly type</span>
</div>
</body>
</html>
